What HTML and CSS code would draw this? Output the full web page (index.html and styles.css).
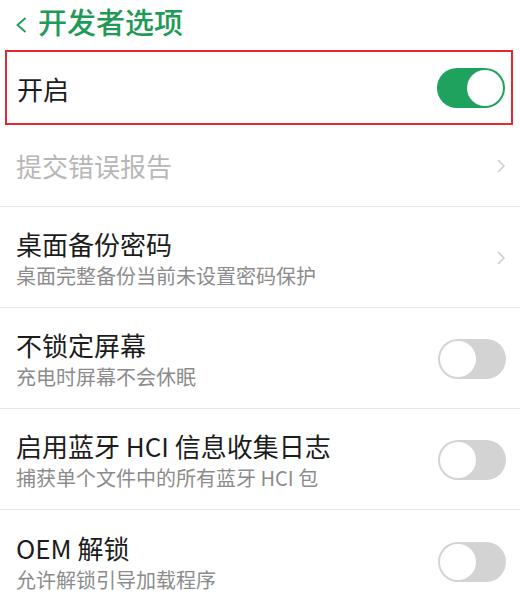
FILE: index.html
```html
<!DOCTYPE html>
<html lang="zh-CN">
<head>
<meta charset="utf-8">
<title>开发者选项</title>
<link rel="stylesheet" href="styles.css">
</head>
<body>
<div class="page">
  <header class="topbar">
    <svg class="back" width="12" height="16" viewBox="0 0 12 16"><path d="M10.5 1 L2.5 8 L10.5 15" fill="none" stroke="#1f9a56" stroke-width="1.8"/></svg>
    <h1 class="heading">开发者选项</h1>
  </header>

  <div class="master">
    <span class="title">开启</span>
    <span class="switch on"><span class="knob"></span></span>
  </div>

  <div class="row short">
    <span class="title disabled">提交错误报告</span>
    <svg class="chev" width="8" height="14" viewBox="0 0 8 14"><path d="M1 1 L7 7 L1 13" fill="none" stroke="#cdcdcd" stroke-width="1.5"/></svg>
  </div>

  <div class="row">
    <div class="texts">
      <span class="title">桌面备份密码</span>
      <span class="sub">桌面完整备份当前未设置密码保护</span>
    </div>
    <svg class="chev" width="8" height="14" viewBox="0 0 8 14"><path d="M1 1 L7 7 L1 13" fill="none" stroke="#cdcdcd" stroke-width="1.5"/></svg>
  </div>

  <div class="row">
    <div class="texts">
      <span class="title">不锁定屏幕</span>
      <span class="sub">充电时屏幕不会休眠</span>
    </div>
    <span class="switch"><span class="knob"></span></span>
  </div>

  <div class="row">
    <div class="texts">
      <span class="title">启用蓝牙 HCI 信息收集日志</span>
      <span class="sub">捕获单个文件中的所有蓝牙 HCI 包</span>
    </div>
    <span class="switch"><span class="knob"></span></span>
  </div>

  <div class="row last">
    <div class="texts">
      <span class="title">OEM 解锁</span>
      <span class="sub">允许解锁引导加载程序</span>
    </div>
    <span class="switch"><span class="knob"></span></span>
  </div>
</div>
</body>
</html>
```

FILE: styles.css
```css
html, body {
  margin: 0;
  padding: 0;
  background: #ffffff;
}

body {
  font-family: "Noto Sans CJK SC", "Noto Sans", sans-serif;
  color: #1c1c1c;
}

.page {
  width: 520px;
  height: 603px;
  overflow: hidden;
}

.topbar {
  height: 48px;
  display: flex;
  align-items: center;
  padding-left: 15px;
  gap: 11px;
  box-sizing: border-box;
}

.back {
  flex: none;
  margin-top: 1px;
}

.heading {
  margin: 0;
  font-size: 29px;
  font-weight: 500;
  color: #1f9a56;
  line-height: 36px;
  margin-top: -6px;
}

.master {
  margin: 2px 7px 1px 5px;
  height: 75px;
  box-sizing: border-box;
  border: 2px solid #e8262e;
  display: flex;
  align-items: center;
  justify-content: space-between;
  padding: 0 6px 0 10px;
}

.master .title {
  margin-top: 3px;
}

.row {
  height: 101px;
  box-sizing: border-box;
  border-bottom: 1px solid #e7e7e7;
  display: flex;
  align-items: center;
  justify-content: space-between;
  padding: 2px 14px 0 16px;
}

.row.short {
  height: 81px;
  padding-top: 0;
}

.row.last {
  border-bottom: none;
}

.texts {
  display: flex;
  flex-direction: column;
  gap: 4px;
}

.title {
  font-size: 26px;
  line-height: 32px;
  color: #1c1c1c;
}

.title.disabled {
  color: #b7b7b7;
}

.sub {
  font-size: 20px;
  line-height: 24px;
  color: #8c8c8c;
}

.chev {
  flex: none;
  margin-right: 1px;
}

.switch {
  flex: none;
  width: 68px;
  height: 40px;
  border-radius: 20px;
  background: #d3d3d3;
  position: relative;
  box-sizing: border-box;
}

.switch .knob {
  position: absolute;
  top: 2px;
  left: 2px;
  width: 36px;
  height: 36px;
  border-radius: 50%;
  background: #ffffff;
}

.switch.on {
  background: #1fa25e;
}

.switch.on .knob {
  left: 30px;
}
```
